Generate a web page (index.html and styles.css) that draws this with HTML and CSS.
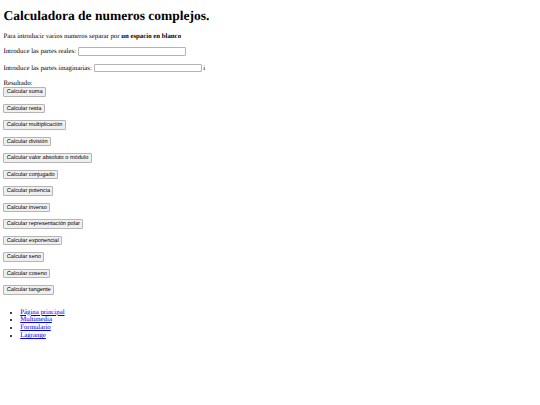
FILE: index.html
```html
<!DOCTYPE html>
<html lang="es">
<head>
<meta charset="utf-8">
<title>Calculadora de numeros complejos</title>
<link rel="stylesheet" href="styles.css">
</head>
<body class="page">
<h1 class="title">Calculadora de numeros complejos.</h1>
<p class="para">Para introducir varios numeros separar por <b>un espacio en blanco</b></p>
<p class="para row">Introduce las partes reales: <input class="field" type="text"></p>
<p class="para row">Introduce las partes imaginarias: <input class="field" type="text"> i</p>
<div class="result">Resultado:</div>
<div class="buttons">
<button class="btn">Calcular suma</button>
<button class="btn">Calcular resta</button>
<button class="btn">Calcular multiplicación</button>
<button class="btn">Calcular división</button>
<button class="btn">Calcular valor absoluto o módulo</button>
<button class="btn">Calcular conjugado</button>
<button class="btn">Calcular potencia</button>
<button class="btn">Calcular inverso</button>
<button class="btn">Calcular representación polar</button>
<button class="btn">Calcular exponencial</button>
<button class="btn">Calcular seno</button>
<button class="btn">Calcular coseno</button>
<button class="btn">Calcular tangente</button>
</div>
<ul class="nav">
<li><a class="link" href="#">Página principal</a></li>
<li><a class="link" href="#">Multimedia</a></li>
<li><a class="link" href="#">Formulario</a></li>
<li><a class="link" href="#">Lagrange</a></li>
</ul>
</body>
</html>
```
FILE: styles.css
```css
html {
  background: #ffffff;
}
.page {
  margin: 3.4px;
  font-family: "Liberation Serif", "Times New Roman", serif;
  font-size: 6.8px;
  line-height: 7.76px;
  color: #000000;
  text-rendering: geometricPrecision;
}
.title {
  font-size: 13.5px;
  line-height: 15.5px;
  font-weight: bold;
  margin: 5px 0 9px;
}
.para {
  margin: 6.75px 0;
}
.row {
  line-height: 8.5px;
}
.field {
  box-sizing: border-box;
  width: 108px;
  height: 8.6px;
  padding: 0;
  margin: 0;
  border: 1px solid #b4b4b4;
  border-radius: 1px;
  font-size: 5.6px;
  vertical-align: middle;
  background: #ffffff;
}
.result {
  margin-top: 6.75px;
}
.buttons {
  display: flex;
  flex-direction: column;
  align-items: flex-start;
  gap: 7.2px;
}
.btn {
  box-sizing: border-box;
  display: block;
  font-family: "Liberation Sans", Arial, sans-serif;
  font-size: 5.6px;
  line-height: 6.3px;
  padding: 1px 2.4px 0;
  margin: 0;
  border: 1px solid #b4b4b4;
  border-radius: 1px;
  background: #efefef;
  color: #000000;
  text-rendering: geometricPrecision;
}
.nav {
  margin: 14.2px 0 6.75px;
  padding-left: 16.8px;
}
.link {
  color: #0000ee;
}
```
